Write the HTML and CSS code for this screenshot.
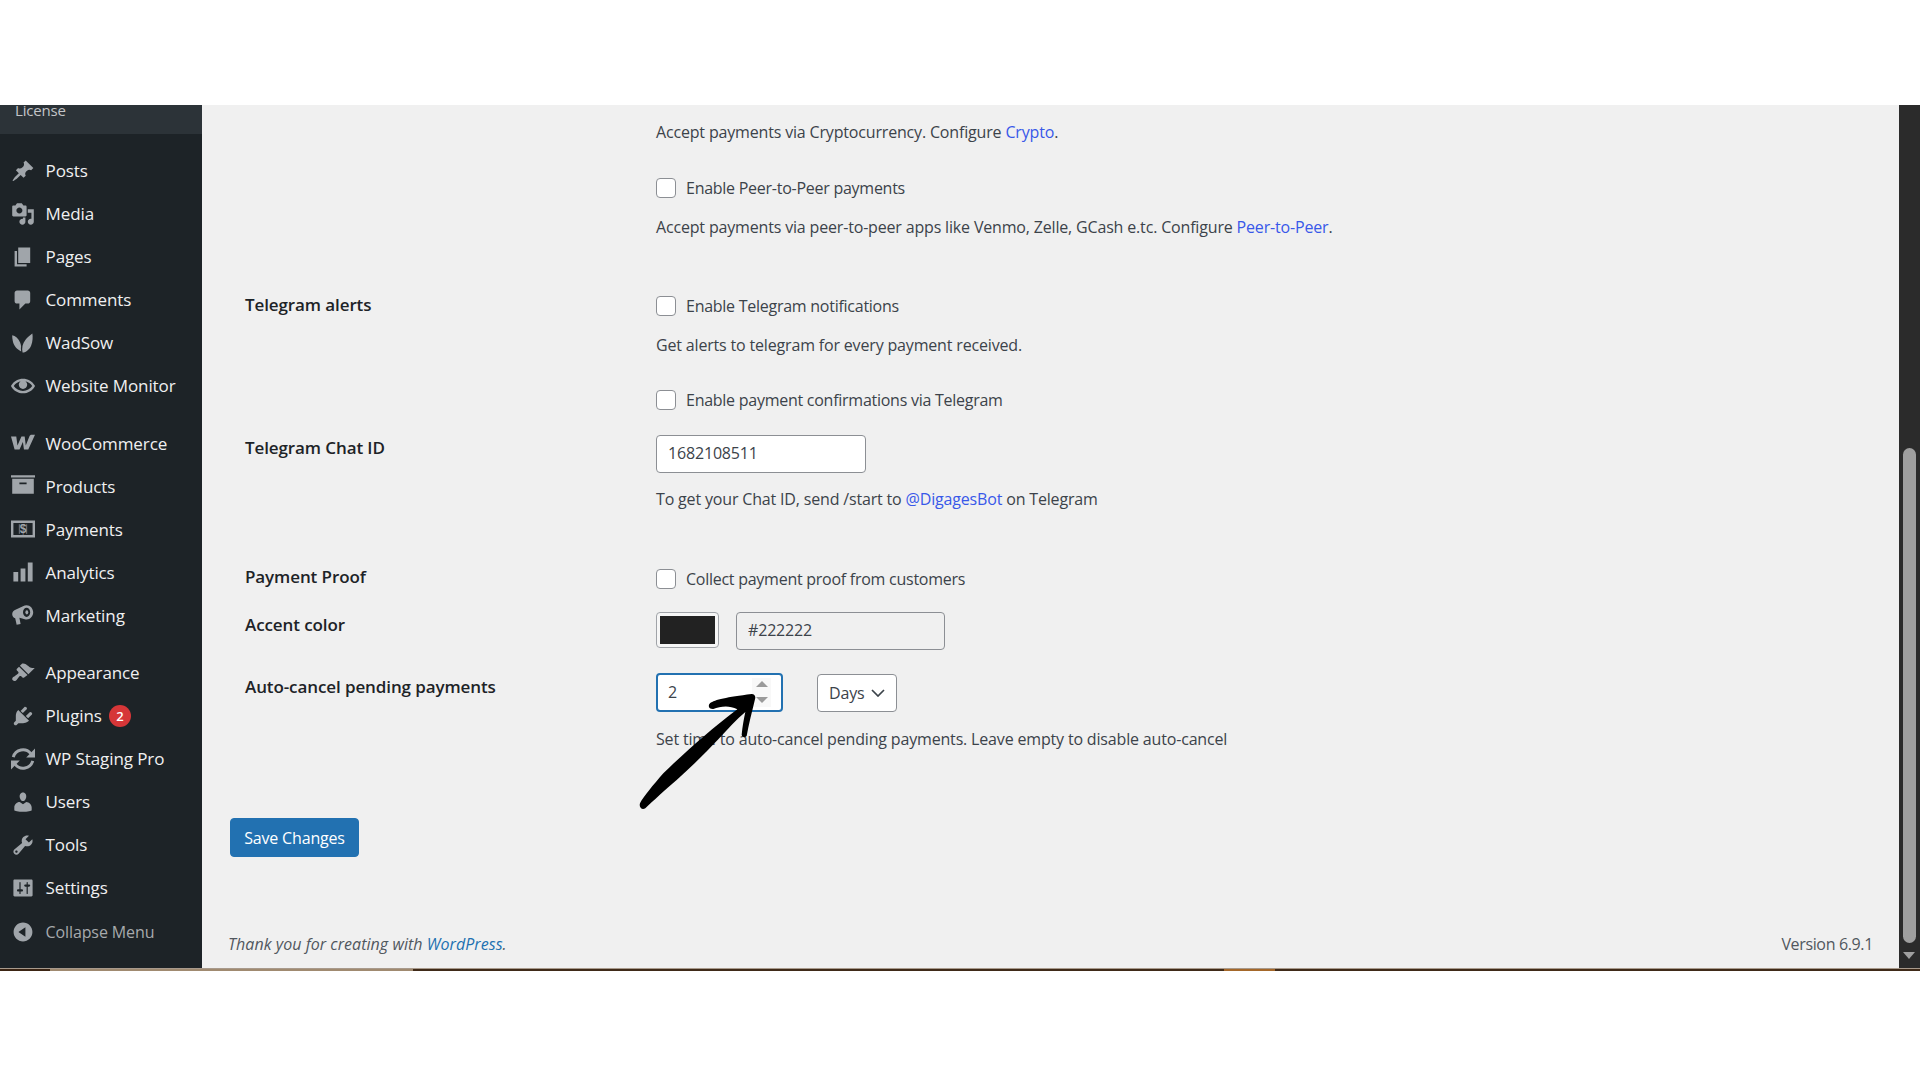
FILE: index.html
```html
<!DOCTYPE html>
<html lang="en">
<head>
<meta charset="utf-8">
<title>Settings</title>
<link rel="stylesheet" href="styles.css">
</head>
<body>
<div class="app">
  <aside class="sidebar">
    <div class="submenu"><span class="submenu-item">License</span></div>
    <nav class="menu">
      <div class="group">
        <a class="item"><svg class="icon" viewBox="0 0 20 20"><path d="M10.44 3.02l1.82-1.82 6.36 6.35-1.83 1.82c-1.05-.68-2.48-.57-3.41.36l-.75.75c-.92.93-1.04 2.35-.35 3.41l-1.83 1.82-2.41-2.41-2.8 2.79c-.42.42-3.38 2.71-3.8 2.29s1.86-3.39 2.28-3.81l2.79-2.79L4.1 9.36l1.83-1.82c1.05.69 2.48.57 3.4-.36l.75-.75c.93-.92 1.05-2.35.36-3.41z"/></svg>Posts</a>
        <a class="item"><svg class="icon" viewBox="0 0 20 20"><path d="M13 11V4c0-.55-.45-1-1-1h-1.67L9 1H5L3.67 3H2c-.55 0-1 .45-1 1v7c0 .55.45 1 1 1h10c.55 0 1-.45 1-1zM7 4.5c1.38 0 2.5 1.12 2.5 2.5S8.38 9.5 7 9.5 4.5 8.38 4.5 7 5.62 4.5 7 4.5zM14 6h5v10.5c0 1.38-1.12 2.5-2.5 2.5S14 17.88 14 16.5s1.12-2.5 2.5-2.5c.17 0 .34.02.5.05V9h-3V6zm-4 8.05V13h2v3.5c0 1.38-1.12 2.5-2.5 2.5S7 17.88 7 16.5 8.12 14 9.5 14c.17 0 .34.02.5.05z"/></svg>Media</a>
        <a class="item"><svg class="icon" viewBox="0 0 20 20"><path d="M6 15V2h10v13H6zm-1 1h8v2H3V5h2v11z"/></svg>Pages</a>
        <a class="item"><svg class="icon" viewBox="0 0 20 20"><path d="M5 2h9c1.1 0 2 .9 2 2v7c0 1.1-.9 2-2 2h-2l-5 5v-5H5c-1.1 0-2-.9-2-2V4c0-1.1.9-2 2-2z"/></svg>Comments</a>
        <a class="item"><svg class="icon" viewBox="0 0 20 20"><path d="M1 3.500c2.600.6 5.200 2.600 6.600 6 .5 1.200.7 2.300.8 3.300-.2 1.200-.2 2.600.1 4.200-3.600-1.500-6.300-4.800-7-8.600C1.100 6.600 1 5 1 3.500zM17.800 2c.5 3 .3 6.600-1 10-1.300 3.200-3.900 5.600-7.200 6-.8-3.800 0-7.800 2.500-10.800C13.600 5.300 15.600 3.500 17.800 2z"/></svg>WadSow</a>
        <a class="item"><svg class="icon" viewBox="0 0 20 20"><path d="M19.700 9.400C17.700 6 14 3.900 10 3.900S2.300 6 .3 9.400L0 10l.3.6c2 3.400 5.700 5.500 9.700 5.500s7.700-2.100 9.700-5.500l.3-.6-.3-.6zM10 14.100c-3.100 0-6-1.600-7.700-4.100C3.600 8 5.700 6.600 8 6.100c-.9.600-1.500 1.700-1.500 2.900 0 1.900 1.600 3.500 3.500 3.500s3.500-1.600 3.500-3.500c0-1.200-.6-2.300-1.500-2.900 2.300.5 4.400 1.900 5.700 3.900-1.700 2.500-4.600 4.100-7.700 4.100z"/></svg>Website Monitor</a>
      </div>
      <div class="group">
        <a class="item"><svg class="icon" viewBox="0 0 20 20"><path d="M0 4.500h4.400l1 7.500 3.300-7.500h2.700l.9 7.500 3-7.500c.3-.8 1-1.300 2-1.300h2.700l-5.600 12.300h-3.600l-.9-6.300-2.800 6.300H3z"/></svg>WooCommerce</a>
        <a class="item"><svg class="icon" viewBox="0 0 20 20"><path d="M0 1h20v2H0zM1 4h18v12.500H1zm6 3v1.500h6V7z"/></svg>Products</a>
        <a class="item"><svg class="icon" viewBox="0 0 20 20"><path fill-rule="evenodd" d="M0 3h20v14H0zm2 2v10h16V5z"/><path d="M6.500 6h1v8h-1zm6 0h1v8h-1z" opacity=".55"/><text class="dollar" x="10" y="13.600">$</text></svg>Payments</a>
        <a class="item"><svg class="icon" viewBox="0 0 20 20"><path d="M18 18V2h-4v16h4zm-6 0V7H8v11h4zm-6 0v-8H2v8h4z"/></svg>Analytics</a>
        <a class="item"><svg class="icon" viewBox="0 0 20 20"><path fill-rule="evenodd" d="M13 1.800c3 0 5.500 2.700 5.500 6s-2.500 6-5.500 6c-.5 0-1-.1-1.500-.3L7 12.200l1 5.300-3.300.7-1.200-5.500C2 12.200 1 10.800 1 9.300c0-1.600 1-3 2.700-3.600L10 2.800c.9-.6 2-1 3-1zm0 2.200c-1.600 0-3 1.700-3 3.800s1.400 3.800 3 3.800 3-1.700 3-3.800S14.600 4 13 4z"/><ellipse cx="13.200" cy="7.800" rx="1.200" ry="1.800"/></svg>Marketing</a>
      </div>
      <div class="group">
        <a class="item"><svg class="icon" viewBox="0 0 20 20"><path d="M14.480 11.060L7.410 3.990l1.500-1.500c.5-.56 2.300-.47 3.510.32 1.210.8 1.430 1.280 2.910 2.100 1.180.64 2.450 1.260 4.450.85zm-.71.71L6.700 4.700 4.930 6.470c-.39.390-.39 1.020 0 1.410l1.060 1.060c.39.390.39 1.030 0 1.420-.6.600-1.430 1.110-2.210 1.690-.35.260-.7.530-1.010.84C1.430 13.230.4 14.960 1.530 16.100c.8.8 1.850.66 2.690.12.5-.31.8-.73 1.220-1.330.55-.77 1.050-1.600 1.650-2.200.39-.39 1.030-.39 1.420 0l1.060 1.060c.39.390 1.020.39 1.410 0z"/></svg>Appearance</a>
        <a class="item"><svg class="icon" viewBox="0 0 20 20"><path d="M13.110 4.360L9.870 7.600 8 5.730l3.240-3.240c.35-.34 1.050-.2 1.560.32.520.51.660 1.210.310 1.550zm-8 1.770l.91-1.120 9.010 9.010-1.190.84c-.71.71-2.630 1.160-3.820 1.160H6.140L4.900 17.260c-.59.59-1.540.59-2.120 0-.59-.58-.59-1.530 0-2.120l1.240-1.240v-3.880c0-1.130.4-3.190 1.090-3.890zm7.260 3.970l3.240-3.240c.34-.35 1.040-.21 1.550.31.520.51.660 1.210.310 1.550l-3.240 3.250z"/></svg>Plugins<span class="badge">2</span></a>
        <a class="item"><svg class="icon" viewBox="1 1 18 18"><path class="sync" d="M2.700 8.600A7.500 7.500 0 0 1 15.800 6"/><path d="M19 2.200v6.600h-6.600z"/><path class="sync" d="M17.300 11.400A7.500 7.500 0 0 1 4.200 14"/><path d="M1 17.800v-6.600h6.600z"/></svg>WP Staging Pro</a>
        <a class="item"><svg class="icon" viewBox="0 0 20 20"><path d="M10 9.250c-2.270 0-2.730-3.440-2.730-3.440C7 4.020 7.820 2 9.970 2c2.160 0 2.980 2.020 2.710 3.810 0 0-.41 3.440-2.680 3.440zm0 2.570L12.720 10c2.390 0 4.520 2.330 4.520 4.530v2.490s-3.650 1.130-7.240 1.130c-3.650 0-7.240-1.130-7.240-1.130v-2.490c0-2.250 1.940-4.480 4.470-4.480z"/></svg>Users</a>
        <a class="item"><svg class="icon" viewBox="0 0 20 20"><path d="M16.680 9.770c-1.340 1.340-3.300 1.670-4.950.99l-5.410 6.520c-.99.99-2.590.99-3.580 0s-.99-2.590 0-3.570l6.520-5.420c-.68-1.650-.35-3.610.99-4.950 1.280-1.280 3.120-1.620 4.720-1.060l-2.890 2.890 2.820 2.820 2.860-2.870c.53 1.580.18 3.390-1.080 4.650zM3.810 16.210c.4.390 1.040.39 1.430 0 .4-.4.4-1.040 0-1.430-.39-.4-1.030-.4-1.430 0-.39.390-.39 1.030 0 1.430z"/></svg>Tools</a>
        <a class="item"><svg class="icon" viewBox="0 0 20 20"><path d="M18 16V4c0-.55-.45-1-1-1H3c-.55 0-1 .45-1 1v12c0 .55.45 1 1 1h14c.55 0 1-.45 1-1zM8 11h1c.55 0 1 .45 1 1s-.45 1-1 1H8v1.500c0 .28-.22.5-.5.5s-.5-.22-.5-.5V13H6c-.55 0-1-.45-1-1s.45-1 1-1h1V5.500c0-.28.22-.5.5-.5s.5.22.5.5V11zm5-2h-1c-.55 0-1-.45-1-1s.45-1 1-1h1V5.500c0-.28.22-.5.5-.5s.5.22.5.5V7h1c.55 0 1 .45 1 1s-.45 1-1 1h-1v5.500c0 .28-.22.5-.5.5s-.5-.22-.5-.5V9z"/></svg>Settings</a>
        <a class="item item-muted"><svg class="icon" viewBox="0 0 20 20"><path d="M10 2.160c4.330 0 7.840 3.510 7.840 7.840s-3.510 7.840-7.840 7.840S2.160 14.330 2.160 10 5.710 2.160 10 2.160zm2 11.720V6.120L6.180 9.970z"/></svg>Collapse Menu</a>
      </div>
    </nav>
  </aside>

  <main class="main">
    <form class="form">
      <div class="row row-first"><div></div><p class="help">Accept payments via Cryptocurrency. Configure <a class="link">Crypto</a>.</p></div>
      <div class="row row-peer"><div></div><label class="check"><input type="checkbox">Enable Peer-to-Peer payments</label></div>
      <div class="row row-help"><div></div><p class="help">Accept payments via peer-to-peer apps like Venmo, Zelle, GCash e.tc. Configure <a class="link">Peer-to-Peer</a>.</p></div>
      <div class="row row-alerts"><div class="th th-alerts">Telegram alerts</div><label class="check"><input type="checkbox">Enable Telegram notifications</label></div>
      <div class="row row-help"><div></div><p class="help">Get alerts to telegram for every payment received.</p></div>
      <div class="row row-confirm"><div></div><label class="check"><input type="checkbox">Enable payment confirmations via Telegram</label></div>
      <div class="row row-chat"><div class="th th-chat">Telegram Chat ID</div><input class="field field-chat" type="text" value="1682108511"></div>
      <div class="row row-help-tight"><div></div><p class="help">To get your Chat ID, send /start to <a class="link">@DigagesBot</a> on Telegram</p></div>
      <div class="row row-proof"><div class="th th-proof">Payment Proof</div><label class="check"><input type="checkbox">Collect payment proof from customers</label></div>
      <div class="row row-accent"><div class="th th-accent">Accent color</div>
        <div class="controls">
          <div class="swatch"><div class="swatch-fill"></div></div>
          <input class="field field-color" type="text" value="#222222">
        </div>
      </div>
      <div class="row row-cancel"><div class="th th-cancel">Auto-cancel pending payments</div>
        <div class="controls controls-cancel">
          <div class="number">
            <input class="number-input" type="text" value="2">
            <span class="spin"><i class="spin-up"></i><i class="spin-down"></i></span>
          </div>
          <div class="select">Days<svg class="chevron" viewBox="0 0 14 8"><path d="M1 1l6 6 6-6"/></svg></div>
        </div>
      </div>
      <div class="row row-help"><div></div><p class="help">Set time to auto-cancel pending payments. Leave empty to disable auto-cancel</p></div>
      <button class="save" type="button">Save Changes</button>
    </form>
    <footer class="footer">
      <span class="thanks">Thank you for creating with <a class="link-wp">WordPress</a>.</span>
      <span class="version">Version 6.9.1</span>
    </footer>
  </main>

  <div class="scrollbar">
    <div class="thumb"></div>
    <div class="scroll-down"></div>
  </div>
</div>
<div class="strip">
  <span class="strip-a"></span><span class="strip-b"></span><span class="strip-c"></span><span class="strip-d"></span><span class="strip-e"></span>
</div>
<svg class="arrow" viewBox="0 0 1020 720"><path d="M60 640C70 620 100 585 130 550C170 510 215 470 250 440C285 410 320 382 352 358C325 344 300 350 280 357C268 358 262 348 270 340C285 328 320 322 395 312C404 312 408 320 405 328C396 365 386 405 380 438C376 444 366 442 365 434C367 410 372 385 376 366C350 388 325 415 295 448C260 485 215 530 170 570C135 600 100 632 76 655C66 662 56 652 60 640Z"/></svg>
</body>
</html>
```
FILE: styles.css
```css
* { box-sizing: border-box; }
html, body { margin: 0; background: #fff; }
body {
  position: relative;
  height: 1080px;
  overflow: hidden;
  padding-top: 105px;
  font-family: "Open Sans", "Noto Sans", sans-serif;
  font-size: 16px;
  letter-spacing: -0.17px;
  color: #3c434a;
}
.app { display: flex; height: 863px; }

/* Sidebar */
.sidebar { width: 202px; flex: none; background: #1d2327; overflow: hidden; }
.submenu { height: 29px; background: #2c3338; padding-left: 15px; overflow: hidden; }
.submenu-item { display: block; margin-top: -7px; line-height: 24px; font-size: 15px; color: #c3c4c7; }
.menu { padding-top: 15px; }
.group { margin-bottom: 14.6px; }
.item {
  display: flex; align-items: center;
  height: 43px;
  padding-left: 11px;
  color: #f0f0f1;
  font-size: 17px;
  letter-spacing: -0.1px;
}
.item-muted { color: #a7aaad; font-size: 16px; margin-top: 1px; }
.icon { width: 24px; height: 24px; flex: none; margin-right: 10.5px; fill: #a0a5aa; }
.sync { fill: none; stroke: #a0a5aa; stroke-width: 2.2; }
.dollar { font-family: "Liberation Sans", sans-serif; font-size: 10px; font-weight: 700; text-anchor: middle; letter-spacing: 0; fill: #a0a5aa; }
.badge {
  width: 22px; height: 22px; margin-left: 7px;
  border-radius: 50%;
  background: #d63638; color: #fff;
  font-size: 13px; font-weight: 600; line-height: 22px; text-align: center;
}

/* Main */
.main { flex: 1; min-width: 0; background: #f0f0f0; padding: 0 26px; display: flex; flex-direction: column; }
.form { display: block; }
.row { display: grid; grid-template-columns: 426px 1fr; padding-left: 2px; min-height: 24px; align-items: start; line-height: 24px; }
.row-first { margin-top: 15px; }
.row-peer { margin-top: 32px; }
.row-help { margin-top: 15px; }
.row-help-tight { margin-top: 14px; }
.row-alerts { margin-top: 55px; }
.row-confirm { margin-top: 31px; }
.row-chat { margin-top: 23px; }
.row-proof { margin-top: 56px; }
.row-accent { margin-top: 21px; }
.row-cancel { margin-top: 23px; }
.row > .th { padding-left: 15px; font-weight: 600; color: #1d2327; font-size: 17px; letter-spacing: -0.1px; }
.th-alerts { margin-top: -1px; }
.th-chat { padding-top: 1px; }
.th-proof { margin-top: -2px; }
.th-accent { padding-top: 1px; }
.th-cancel { padding-top: 2px; }
.help { margin: 0; }
.link { color: #3858e9; }
.check { display: flex; align-items: center; gap: 10px; height: 24px; letter-spacing: -0.26px; }
.check input {
  appearance: none; margin: 0;
  width: 20px; height: 20px;
  background: #fff;
  border: 1px solid #8c8f94; border-radius: 4px;
}
.field {
  height: 38px; padding: 0 11px 2px;
  border: 1px solid #8c8f94; border-radius: 4px;
  background: #fff; color: #3c434a;
  font: inherit; letter-spacing: inherit;
  outline: none;
}
.field-chat { width: 210px; }
.field-color { width: 209px; background: #f0f0f0; margin-left: 17px; }
.controls { display: flex; align-items: flex-start; }
.swatch {
  width: 63px; height: 36px; padding: 3px;
  border: 1px solid #a0a3a8; border-radius: 4px; background: #f6f6f6;
}
.swatch-fill { width: 100%; height: 100%; background: #222; }
.controls-cancel { align-items: center; gap: 34px; }
.number {
  position: relative; width: 127px; height: 39px;
  border: 2px solid #2271b1; border-radius: 4px; background: #fff;
}
.number-input {
  width: 100%; height: 100%; padding: 0 10px 2px;
  border: 0; background: transparent; outline: none; color: #3c434a;
  font: inherit; letter-spacing: inherit; border-radius: 4px;
}
.spin {
  position: absolute; right: 10px; top: 3px;
  width: 19px; height: 29px;
  background: #f8f8f8;
  display: flex; flex-direction: column; align-items: center; justify-content: space-between;
  padding: 3px 0 4px;
}
.spin-up, .spin-down { width: 0; height: 0; border-left: 6px solid transparent; border-right: 6px solid transparent; }
.spin-up { border-bottom: 6px solid #9a9a9a; }
.spin-down { border-top: 6px solid #9a9a9a; }
.select {
  width: 80px; height: 38px; padding: 0 11px;
  border: 1px solid #8c8f94; border-radius: 4px; background: #fff;
  display: flex; align-items: center; justify-content: space-between;
}
.chevron { width: 14px; height: 8px; fill: none; stroke: #3c434a; stroke-width: 1.7; }
.save {
  display: block;
  margin: 67px 0 0 2px;
  width: 129px; height: 39px; padding: 0;
  border: 1px solid #2271b1; border-radius: 4px;
  background: #2271b1; color: #fff;
  font: inherit; letter-spacing: inherit;
}

/* Footer */
.footer { display: flex; justify-content: space-between; margin-top: 75px; line-height: 24px; color: #50575e; }
.thanks { font-style: italic; letter-spacing: 0.05px; }
.version { letter-spacing: -0.35px; }
.link-wp { color: #2271b1; }

/* Scrollbar */
.scrollbar { width: 21px; flex: none; background: #2b2b2b; padding: 343px 0 0 4px; }
.thumb { width: 13px; height: 495px; border-radius: 7px; background: #9f9f9f; }
.scroll-down { width: 0; height: 0; margin-top: 9px; border-left: 6.5px solid transparent; border-right: 6.5px solid transparent; border-top: 7px solid #a0a0a0; }

/* Photo edge strip */
.strip { display: flex; height: 3px; border-top: 1px solid #a89a8c; }
.strip span { display: block; height: 100%; }
.strip-a { width: 50px; background: #3b2413; }
.strip-b { width: 363px; background: #a08a70; }
.strip-c { width: 811px; background: #3f2a18; }
.strip-d { width: 51px; background: #a5682a; }
.strip-e { flex: 1; background: #3f2a18; }

/* Annotation drawn over the form */
.arrow { position: absolute; left: 620px; top: 590px; width: 340px; height: 240px; fill: #000; pointer-events: none; }
```
